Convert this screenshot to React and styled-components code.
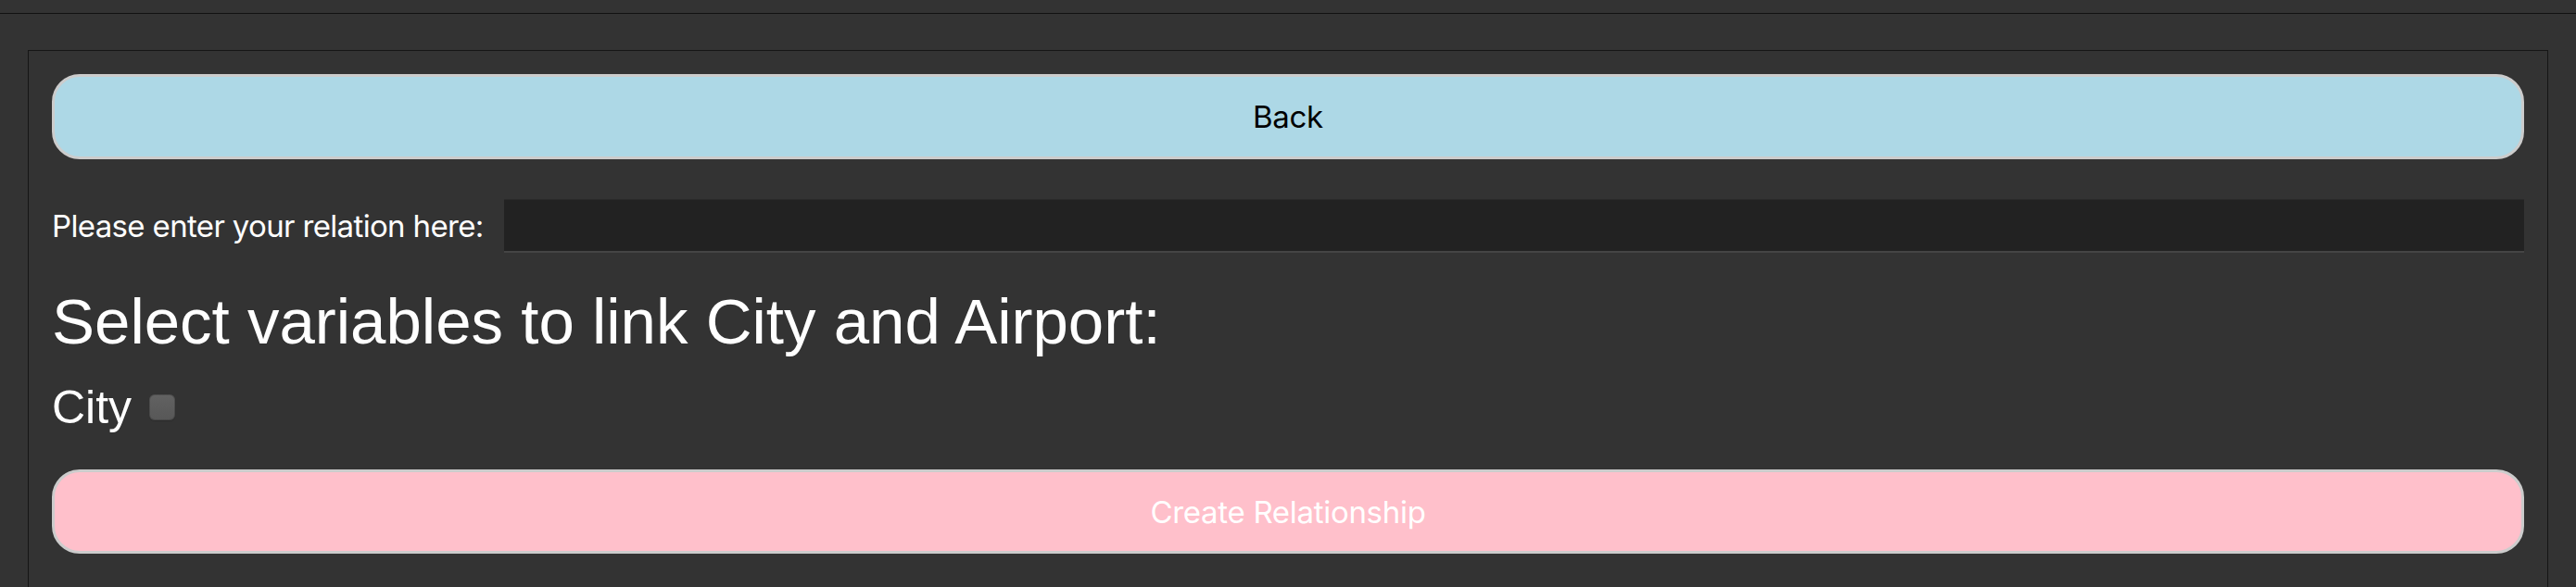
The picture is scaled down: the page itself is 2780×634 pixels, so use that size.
import React from "react";
import styled, { createGlobalStyle } from "styled-components";

const GlobalStyle = createGlobalStyle`
  html, body {
    margin: 0;
    padding: 0;
    background: #333333;
  }
  body {
    font-family: Inter, "Liberation Sans", sans-serif;
    color: #ffffff;
  }
`;

const Page = styled.div`
  display: flex;
  flex-direction: column;
  min-height: 634px;
  background: #333333;
`;

const TopBar = styled.div`
  height: 14px;
  background: #333333;
  border-bottom: 1px solid #111111;
`;

const Panel = styled.div`
  margin: 39px 30px 0 30px;
  border: 1px solid #161616;
  border-bottom: none;
  padding: 25px 25px 40px 25px;
  display: flex;
  flex-direction: column;
  flex: 1;
`;

const ActionButton = styled.button`
  display: flex;
  align-items: center;
  justify-content: center;
  width: 100%;
  height: ${(p) => p.$height}px;
  margin-top: ${(p) => p.$top || 0}px;
  border: 3px solid #cccccc;
  border-radius: 30px;
  background: ${(p) => p.$bg};
  color: ${(p) => p.$fg};
  font-family: Inter, "Liberation Sans", sans-serif;
  font-size: 33px;
  font-weight: 400;
  letter-spacing: -0.3px;
  cursor: pointer;
  padding: 0;
`;

const RelationRow = styled.div`
  display: flex;
  align-items: center;
  gap: 22px;
  height: 58px;
  margin-top: 43px;
`;

const RelationLabel = styled.label`
  font-family: Inter, "Liberation Sans", sans-serif;
  font-size: 33px;
  letter-spacing: -0.65px;
  color: #ffffff;
  white-space: nowrap;
`;

const RelationInput = styled.input`
  flex: 1;
  height: 58px;
  box-sizing: border-box;
  background: #222222;
  border: none;
  border-top: 1px solid #2a2a2a;
  border-bottom: 2px solid #454545;
  color: #ffffff;
  font-size: 32px;
  outline: none;
  padding: 0 12px;
`;

const Heading = styled.h2`
  margin: 36px 0 0 0;
  font-family: "Liberation Sans", Arial, sans-serif;
  font-size: 69px;
  line-height: 78px;
  font-weight: 400;
  color: #ffffff;
`;

const VariableRow = styled.div`
  display: flex;
  align-items: center;
  gap: 19px;
  height: 56px;
  margin-top: 25px;
`;

const VariableName = styled.span`
  font-family: "Liberation Sans", Arial, sans-serif;
  font-size: 50px;
  line-height: 56px;
  color: #ffffff;
`;

const Check = styled.input.attrs({ type: "checkbox" })`
  appearance: none;
  -webkit-appearance: none;
  margin: 0;
  width: 28px;
  height: 28px;
  border-radius: 6px;
  background: linear-gradient(#626262, #575757);
  box-shadow: inset 0 0 0 1px rgba(0, 0, 0, 0.18), 0 1px 1px rgba(0, 0, 0, 0.15);
  cursor: pointer;
`;

export default function App() {
  return (
    <>
      <GlobalStyle />
      <Page>
        <TopBar />
        <Panel>
          <ActionButton $bg="#add8e6" $fg="#000000" $height={92}>
            Back
          </ActionButton>
          <RelationRow>
            <RelationLabel htmlFor="relation">Please enter your relation here:</RelationLabel>
            <RelationInput id="relation" type="text" />
          </RelationRow>
          <Heading>Select variables to link City and Airport:</Heading>
          <VariableRow>
            <VariableName>City</VariableName>
            <Check />
          </VariableRow>
          <ActionButton $bg="#ffc0cb" $fg="#ffffff" $height={91} $top={39}>
            Create Relationship
          </ActionButton>
        </Panel>
      </Page>
    </>
  );
}
